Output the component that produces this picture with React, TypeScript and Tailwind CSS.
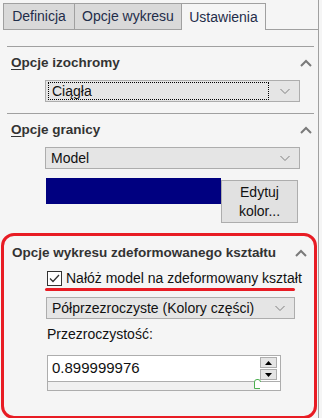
import React from "react";

const Chevron = ({ up }: { up?: boolean }) => (
  <svg width="12" height="8" viewBox="0 0 12 8" className="block">
    {up ? (
      <path d="M1 7 L6 2 L11 7" fill="none" stroke="#7a7a7a" strokeWidth="2" />
    ) : (
      <path d="M1.5 2 L6 6.5 L10.5 2" fill="none" stroke="#808080" strokeWidth="1" />
    )}
  </svg>
);

const Select = ({ label, focus }: { label: string; focus?: boolean }) => (
  <div className="ml-[45px] mr-[22px] h-[22px] border border-[#adadad] bg-[#e5e5e5] flex items-center pl-[2px] pr-[8px]">
    <div className={`flex-1 h-[18px] flex items-center pl-[3px] ${focus ? "border border-dotted border-black" : ""}`}>
      <span className="text-[14px] text-[#111] whitespace-nowrap">{label}</span>
    </div>
    <div className="w-[22px] flex justify-end">
      <Chevron />
    </div>
  </div>
);

const Header = ({ title, u, tall }: { title: string; u?: boolean; tall?: boolean }) => (
  <div className={`flex items-center justify-between pl-[11px] pr-[10px] ${tall ? "h-[30px]" : "h-[26px]"}`}>
    <span className="text-[13.5px] font-bold text-[#333] whitespace-nowrap">
      {u ? (
        <>
          <span className="underline underline-offset-2">O</span>
          {title.slice(1)}
        </>
      ) : (
        title
      )}
    </span>
    <Chevron up />
  </div>
);

export default function App() {
  return (
    <div
      className="w-[322px] h-[418px] bg-[#f5f5f5] relative overflow-hidden"
      style={{ fontFamily: '"Liberation Sans", Arial, sans-serif' }}
    >
      <div className="absolute right-[3px] top-0 bottom-0 w-px bg-[#a0a0a0]" />
      {/* tabs */}
      <div className="flex pt-[3px] pl-[3px] h-[30px]">
        <div className="w-[72px] h-[27px] flex items-center justify-center bg-[#d9d9d9] border border-[#a0a0a0] text-[14px] text-[#1f2d4a] whitespace-nowrap">
          Definicja
        </div>
        <div className="w-[107px] h-[27px] flex items-center justify-center bg-[#d9d9d9] border border-l-0 border-[#a0a0a0] text-[14px] text-[#1f2d4a] whitespace-nowrap">
          Opcje wykresu
        </div>
        <div className="w-[84px] h-[27px] flex items-center justify-center bg-[#f5f5f5] border border-b-0 border-l-0 border-[#a0a0a0] text-[14px] text-[#1f2d4a] whitespace-nowrap">
          Ustawienia
        </div>
        <div className="flex-1 self-end h-px bg-[#a0a0a0] mr-[3px]" />
      </div>
      <div className="h-[16px]" />
      <div className="mx-[7px] mr-[8px] h-px bg-[#a0a0a0]" />
      <div className="h-[3px]" />
      <Header title="Opcje izochromy" u />
      <div className="h-[4px]" />
      <Select label="Ciągła" focus />
      <div className="h-[11px]" />
      <div className="mx-[7px] mr-[8px] h-px bg-[#a0a0a0]" />
      <div className="h-[3px]" />
      <Header title="Opcje granicy" u />
      <div className="h-[4px]" />
      <Select label="Model" />
      <div className="flex ml-[46px] mt-[9px]">
        <div className="w-[175px] h-[26px] bg-[#000080]" />
        <div className="mt-[2px] w-[77px] h-[43px] border border-[#adadad] bg-[#e1e1e1] flex flex-col items-center justify-center text-[14px] leading-[19px] text-[#111]">
          <span>Edytuj</span>
          <span>kolor...</span>
        </div>
      </div>
      {/* red section */}
      <div className="absolute left-[1px] top-[233px] w-[316px] h-[186px] border-[3px] border-[#e81c24] rounded-[13px] pt-[2px]">
        <div className="-ml-[3px] -mr-[3px]">
          <Header title="Opcje wykresu zdeformowanego kształtu" tall />
          <div className="flex items-center ml-[46px] h-[18px] mt-[1px] relative">
            <div className="w-[15px] h-[15px] border border-[#333] bg-white flex items-center justify-center">
              <svg width="11" height="9" viewBox="0 0 11 9">
                <path d="M1 4.5 L4 7.5 L10 1" fill="none" stroke="#333" strokeWidth="1.3" />
              </svg>
            </div>
            <span className="ml-[4px] text-[14px] text-[#111] whitespace-nowrap">Nałóż model na zdeformowany kształt</span>
            <div className="absolute left-[-2px] top-[19px] w-[250px] h-[3px] rounded-full bg-[#e81c24]" />
          </div>
          <div className="h-[10px]" />
          <Select label="Półprzezroczyste (Kolory części)" />
          <div className="ml-[46px] mt-[5px] text-[14px] text-[#111] h-[20px] flex items-center">Przezroczystość:</div>
          <div className="ml-[46px] mr-[36px] mt-[11px] border border-[#adadad]">
            <div className="h-[25px] bg-white flex items-center pl-[4px] pr-[3px]">
              <span className="flex-1 text-[15px] text-[#111]">0.899999976</span>
              <div className="flex flex-col gap-[1px]">
                <div className="w-[17px] h-[11px] bg-[#e5e5e5] border border-[#adadad] flex items-center justify-center">
                  <svg width="7" height="4" viewBox="0 0 7 4"><path d="M0 4 L3.5 0 L7 4 Z" fill="#000" /></svg>
                </div>
                <div className="w-[17px] h-[11px] bg-[#e5e5e5] border border-[#adadad] flex items-center justify-center">
                  <svg width="7" height="4" viewBox="0 0 7 4"><path d="M0 0 L3.5 4 L7 0 Z" fill="#000" /></svg>
                </div>
              </div>
            </div>
            <div className="h-[9px] border-t border-[#adadad] bg-[#f0f0f0] relative">
              <div className="absolute left-[206px] -top-[3px] w-[7px] h-[10px] bg-white border border-[#4caf50] rounded-t-[3px]" />
              <div className="absolute left-[212px] top-0 right-0 bottom-0 bg-white" />
            </div>
          </div>
        </div>
      </div>
    </div>
  );
}
